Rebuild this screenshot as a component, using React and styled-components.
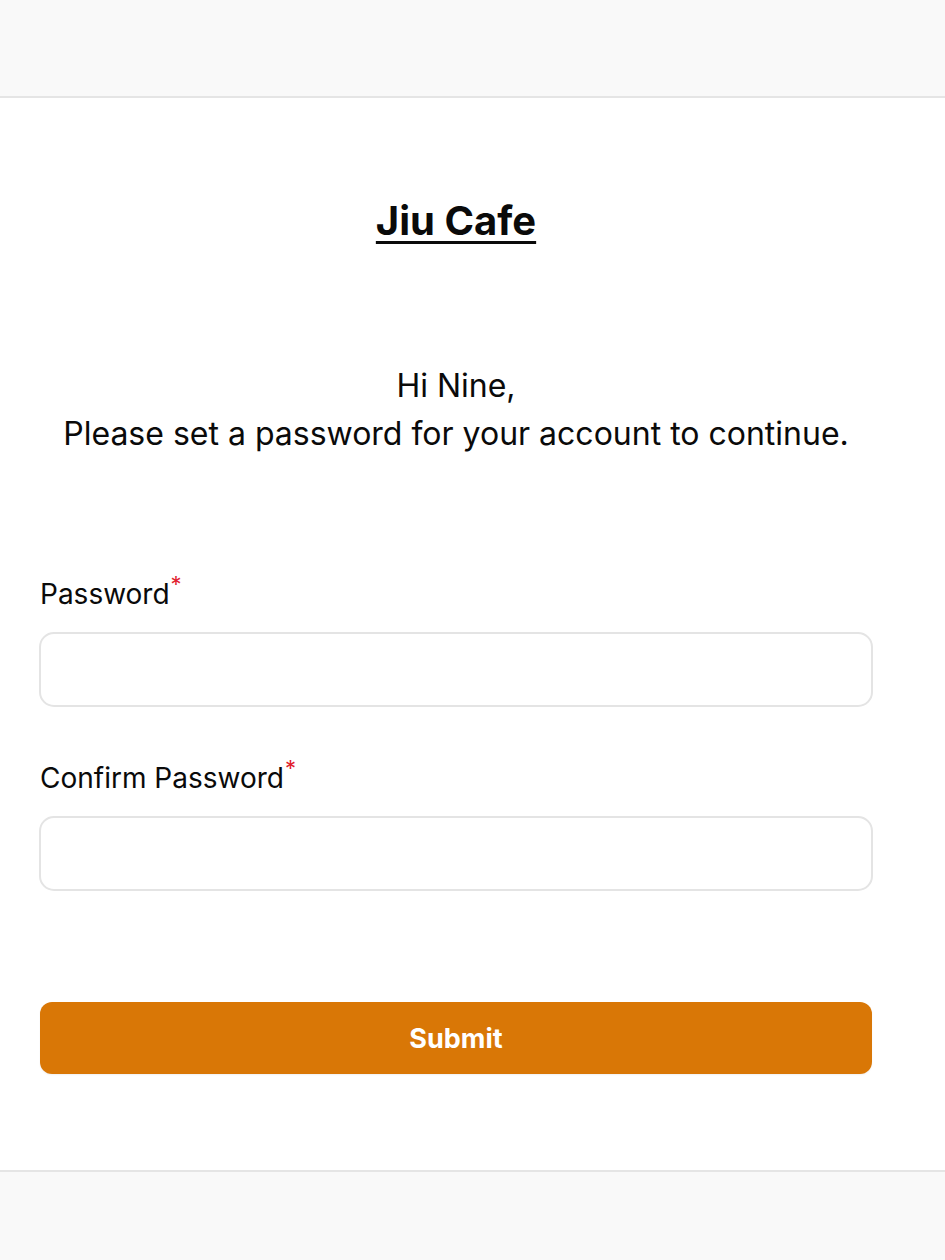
import React from "react";
import styled, { createGlobalStyle } from "styled-components";

const Global = createGlobalStyle`
  html, body { margin: 0; padding: 0; background: #ffffff; }
  body { font-family: Inter, "Noto Sans", sans-serif; color: #0a0a0a; }
  * { box-sizing: border-box; }
`;

const Page = styled.div`
  display: flex;
  flex-direction: column;
  min-height: 1260px;
  width: 945px;
`;

const Header = styled.header`
  height: 98px;
  background: #f9f9f9;
  border-bottom: 2px solid #e5e5e5;
`;

const Main = styled.main`
  width: 912px;
  padding: 99px 39px 96px;
  display: flex;
  flex-direction: column;
  background: #ffffff;
`;

const Title = styled.h1`
  margin: 0;
  text-align: center;
  font-size: 40px;
  line-height: 48px;
  font-weight: 700;
  text-decoration: underline;
  text-decoration-thickness: 3px;
  text-underline-offset: 6px;
`;

const Greeting = styled.p`
  margin: 117px 0 0;
  text-align: center;
  font-size: 32px;
  line-height: 48px;
  font-weight: 400;
`;

const Form = styled.form`
  display: flex;
  flex-direction: column;
  margin-top: 118px;
`;

const Field = styled.div`
  display: flex;
  flex-direction: column;
  gap: 20px;
  margin-top: ${(p) => p.$top || 0}px;
`;

const Label = styled.label`
  font-size: 28px;
  line-height: 36px;
  padding-left: 1px;
`;

const Req = styled.sup`
  color: #e11d2e;
  font-size: 22px;
  line-height: 0;
  vertical-align: 12px;
  margin-left: 1px;
`;

const Input = styled.input`
  width: 100%;
  height: 75px;
  border: 2px solid #e4e4e4;
  border-radius: 15px;
  background: #fff;
  font-size: 24px;
  padding: 0 18px;
  font-family: inherit;
  outline: none;
`;

const Button = styled.button`
  margin: 111px 1px 0;
  height: 72px;
  border: none;
  border-radius: 12px;
  background: #d97706;
  color: #ffffff;
  font-family: Inter, sans-serif;
  font-size: 27px;
  font-weight: 700;
  cursor: pointer;
  box-shadow: 0 1px 2px rgba(0, 0, 0, 0.06);
`;

const Footer = styled.footer`
  flex: 1;
  background: #f9f9f9;
  border-top: 2px solid #e5e5e5;
`;

export default function App() {
  return (
    <>
      <Global />
      <Page>
        <Header />
        <Main>
          <Title>Jiu Cafe</Title>
          <Greeting>
            Hi Nine,
            <br />
            Please set a password for your account to continue.
          </Greeting>
          <Form onSubmit={(e) => e.preventDefault()}>
            <Field>
              <Label htmlFor="pw">
                Password<Req>*</Req>
              </Label>
              <Input id="pw" type="password" />
            </Field>
            <Field $top={53}>
              <Label htmlFor="cpw">
                Confirm Password<Req>*</Req>
              </Label>
              <Input id="cpw" type="password" />
            </Field>
            <Button type="submit">Submit</Button>
          </Form>
        </Main>
        <Footer />
      </Page>
    </>
  );
}
